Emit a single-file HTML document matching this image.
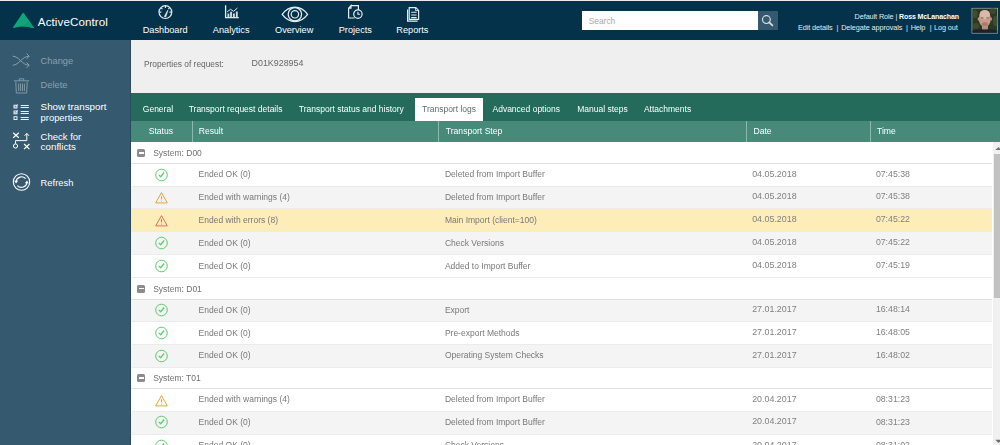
<!DOCTYPE html>
<html><head><meta charset="utf-8">
<style>
*{box-sizing:border-box;margin:0;padding:0}
html,body{width:1000px;height:445px;overflow:hidden;background:#fff;font-family:"Liberation Sans",sans-serif;position:relative}
.abs{position:absolute}
.t{position:absolute;white-space:nowrap;line-height:1;font-family:"Liberation Sans",sans-serif}
b{font-weight:700}
</style></head><body><div id="wrap" style="position:absolute;left:0;top:0;width:1000px;height:445px;filter:blur(0.5px)">
<div class="abs" style="left:0;top:0;width:1000px;height:1px;background:#eeebec"></div><div class="abs" style="left:0;top:1px;width:1000px;height:39px;background:#03324a"></div><svg class="abs" style="left:0;top:0" width="120" height="40" viewBox="0 0 120 40">
<path d="M22.7,12.9 Q23.3,12.4 23.9,13.2 L33.7,27.3 Q34.2,28.3 33.1,28.1 Q27.8,26.4 22.6,26.6 Q17.6,26.8 13.8,27.9 Q12.6,28.1 13.2,27.1 Z" fill="#10a47b"/>
<path d="M27.5,21.5 L33.7,27.3 Q34.2,28.3 33.1,28.1 Q27.8,26.4 22.6,26.6 Z" fill="#0d9a72" opacity="0.8"/>
</svg><div class="t" style="left:37.80px;top:15.98px;font-size:11.6px;color:#ffffff;font-weight:400;letter-spacing:0.1px;">ActiveControl</div>
<div class="t" style="left:142.70px;top:25.61px;font-size:9.2px;color:#ffffff;font-weight:400;letter-spacing:0px;">Dashboard</div>
<div class="t" style="left:212.80px;top:25.61px;font-size:9.2px;color:#ffffff;font-weight:400;letter-spacing:0px;">Analytics</div>
<div class="t" style="left:275.00px;top:25.61px;font-size:9.2px;color:#ffffff;font-weight:400;letter-spacing:0px;">Overview</div>
<div class="t" style="left:338.70px;top:25.61px;font-size:9.2px;color:#ffffff;font-weight:400;letter-spacing:0px;">Projects</div>
<div class="t" style="left:396.30px;top:25.61px;font-size:9.2px;color:#ffffff;font-weight:400;letter-spacing:0px;">Reports</div>
<svg class="abs" style="left:0;top:0" width="440" height="40" viewBox="0 0 440 40" fill="none" stroke="#e6ecef" stroke-width="1.2">
<circle cx="165.4" cy="12.1" r="6.4"/>
<path d="M165.4,6.1V8 M161.2,7.9L162.5,9.2 M169.6,7.9L168.3,9.2 M159.4,12.1H161.3 M171.4,12.1H169.5" stroke-width="1.1"/>
<path d="M164.2,16.4 L167.5,10.3 Q168,10 168.1,10.6 L165.9,17 Q165,17.4 164.2,16.4 Z" fill="#e6ecef" stroke-width="0.3"/>
<path d="M225.6,5.2 V17.7 H238.8" stroke-width="1.3"/>
<path d="M228.4,17.4V13.6 M231.1,17.4V11.8 M233.9,17.4V13.4 M236.8,17.4V11.4" stroke-width="1.9" stroke="#cfd9dd"/>
<path d="M227.2,11.8 L230.6,9.3 L233.6,11.4 L237.4,8" stroke-width="1"/>
<path d="M282.2,14.3 C286.5,8.6 291,7.1 294.9,7.1 C298.8,7.1 303.3,8.6 307.6,14.3 C303.3,20 298.8,21.5 294.9,21.5 C291,21.5 286.5,20 282.2,14.3 Z" stroke-width="1.3"/>
<circle cx="294.9" cy="14.3" r="6.7" stroke-width="1.3"/>
<circle cx="294.9" cy="14.3" r="3.7" stroke-width="1.2"/>
<path d="M351,5.6 H358.4 V10 M354.5,18 H348.6 V8.2 L351,5.6 V8.2 H348.6" />
<circle cx="357.9" cy="14.1" r="4.2"/>
<path d="M357.9,11.7 V14.3 H360.1" stroke-width="1.1"/>
<path d="M407.6,9.4 V21.2 H417.6" />
<path d="M409.2,7.6 H415.8 L418.6,10.4 V19.4 H409.2 Z" />
<path d="M415.6,7.8 V10.6 H418.4" stroke-width="0.9"/>
<path d="M411.2,12.3 H416.6 M411.2,15 H416.6 M411.2,17.6 H416.6" stroke-width="1.1"/>
</svg><div class="abs" style="left:582px;top:11px;width:175.5px;height:19.1px;background:#fff"></div><div class="t" style="left:588.70px;top:16.59px;font-size:8.4px;color:#a9a9a9;font-weight:400;letter-spacing:0px;">Search</div>
<div class="abs" style="left:757.5px;top:11px;width:20.5px;height:19.1px;background:#35596f"></div><svg class="abs" style="left:750px;top:8px" width="30" height="26" viewBox="750 8 30 26" fill="none" stroke="#d8e0e4" stroke-width="1.2">
<circle cx="766.4" cy="19.6" r="3.9"/><path d="M769.2,22.4 L772.4,25.4" stroke-width="1.7" stroke-linecap="round"/></svg><div class="t" style="left:854.60px;top:13.22px;font-size:7.3px;color:#e4ebee;font-weight:400;letter-spacing:-0.1px;">Default Role</div>
<div class="t" style="left:895.40px;top:13.47px;font-size:7.0px;color:#e4ebee;font-weight:400;letter-spacing:0px;">|</div>
<div class="t" style="left:899.00px;top:13.47px;font-size:7.0px;color:#ffffff;font-weight:700;letter-spacing:-0.1px;">Ross McLanachan</div>
<div class="t" style="left:798.00px;top:24.42px;font-size:7.3px;color:#e4ebee;font-weight:400;letter-spacing:-0.1px;">Edit details</div>
<div class="t" style="left:836.40px;top:24.42px;font-size:7.3px;color:#e4ebee;font-weight:400;letter-spacing:-0.1px;">|</div>
<div class="t" style="left:841.20px;top:24.42px;font-size:7.3px;color:#e4ebee;font-weight:400;letter-spacing:-0.1px;">Delegate approvals</div>
<div class="t" style="left:906.00px;top:24.42px;font-size:7.3px;color:#e4ebee;font-weight:400;letter-spacing:-0.1px;">|</div>
<div class="t" style="left:910.70px;top:24.42px;font-size:7.3px;color:#e4ebee;font-weight:400;letter-spacing:-0.1px;">Help</div>
<div class="t" style="left:929.80px;top:24.42px;font-size:7.3px;color:#e4ebee;font-weight:400;letter-spacing:-0.1px;">|</div>
<div class="t" style="left:934.00px;top:24.42px;font-size:7.3px;color:#e4ebee;font-weight:400;letter-spacing:-0.1px;">Log out</div>
<svg class="abs" style="left:970px;top:6px" width="30" height="30" viewBox="970 6 30 30">
<defs><filter id="bl" x="-20%" y="-20%" width="140%" height="140%"><feGaussianBlur stdDeviation="0.55"/></filter>
<clipPath id="cp"><rect x="972.3" y="8.6" width="25" height="24.2"/></clipPath></defs>
<rect x="971.6" y="7.9" width="26.4" height="25.6" fill="#a9b8bd"/>
<g clip-path="url(#cp)">
<rect x="972" y="8" width="26" height="26" fill="#2b3824"/>
<g filter="url(#bl)">
<ellipse cx="975" cy="14" rx="2.5" ry="4" fill="#3f4e32"/>
<ellipse cx="995.5" cy="21" rx="2.5" ry="5" fill="#3f4e33"/>
<ellipse cx="993" cy="11" rx="3" ry="3" fill="#3b4a30"/>
<ellipse cx="976" cy="26" rx="3" ry="3" fill="#3e4c32"/>
<rect x="982" y="23" width="6" height="7" fill="#b88a7a"/>
<ellipse cx="984.8" cy="18.8" rx="6" ry="8.4" fill="#c99b8b"/>
<ellipse cx="984.8" cy="14.6" rx="5.2" ry="4.6" fill="#dcb8a9"/>
<ellipse cx="978.6" cy="19" rx="1" ry="1.8" fill="#c0907f"/>
<ellipse cx="991" cy="19" rx="1" ry="1.8" fill="#c0907f"/>
<rect x="981" y="17.4" width="2.4" height="1" fill="#7a5a50"/>
<rect x="986.4" y="17.4" width="2.4" height="1" fill="#7a5a50"/>
<ellipse cx="984.8" cy="24.3" rx="3.2" ry="2" fill="#a87d70"/>
<path d="M970,36 L971,31 Q978,28.6 984.8,29.6 Q992,28.6 999,31 L1000,36 Z" fill="#1e2229"/>
</g></g>
</svg><div class="abs" style="left:0;top:40px;width:131px;height:405px;background:#35596f"></div><div class="t" style="left:40.60px;top:56.53px;font-size:9.3px;color:#8aa0ad;font-weight:400;letter-spacing:0px;">Change</div>
<div class="t" style="left:40.60px;top:80.63px;font-size:9.3px;color:#8aa0ad;font-weight:400;letter-spacing:0px;">Delete</div>
<div class="t" style="left:40.60px;top:102.40px;font-size:9.8px;color:#ffffff;font-weight:400;letter-spacing:0px;">Show transport</div>
<div class="t" style="left:40.60px;top:112.64px;font-size:9.4px;color:#ffffff;font-weight:400;letter-spacing:0px;">properties</div>
<div class="t" style="left:40.60px;top:131.86px;font-size:9.5px;color:#ffffff;font-weight:400;letter-spacing:0px;">Check for</div>
<div class="t" style="left:40.60px;top:141.50px;font-size:9.8px;color:#ffffff;font-weight:400;letter-spacing:0px;">conflicts</div>
<div class="t" style="left:40.60px;top:177.64px;font-size:9.4px;color:#ffffff;font-weight:400;letter-spacing:0px;">Refresh</div>
<svg class="abs" style="left:0;top:40px" width="40" height="160" viewBox="0 40 40 160" fill="none" stroke="#8aa0ad" stroke-width="1">
<path d="M12.8,56.2 C19,56.2 22,65.2 29,65.2 M12.8,65.2 C19,65.2 22,56.2 29,56.2 M26.6,53.6 L29.2,56.2 L26.6,58.8 M26.6,62.6 L29.2,65.2 L26.6,67.8"/>
<path d="M13.9,80.8 H29.1 M19.3,80.6 V78.8 H23.7 V80.6 M15.8,81.6 L16.3,93 H26.7 L27.2,81.6 M18.7,83.5 V91 M20.6,83.5V91 M22.5,83.5V91 M24.4,83.5V91" stroke-width="0.9"/>
</svg><svg class="abs" style="left:0;top:95px" width="40" height="110" viewBox="0 95 40 110" fill="none" stroke="#ffffff" stroke-width="1">
<rect x="14" y="105.2" width="3" height="2.8" stroke-width="0.9"/><rect x="14" y="111" width="3" height="2.8" stroke-width="0.9"/>
<rect x="14" y="116.7" width="3" height="2.8" stroke-width="0.9"/>
<path d="M14.6,106.4 L15.5,107.3 L17.6,104.4 M14.6,112.2 L15.5,113.1 L17.6,110.2" stroke-width="0.8"/>
<path d="M20.7,105.5 H28.8 M20.7,107.5 H28.8 M20.7,111.5 H28.8 M20.7,113.5 H28.8 M20.7,117.5 H28.8 M20.7,119.5 H28.8" stroke-width="0.9"/>
<path d="M13.2,132.8 L18.8,137.8 M18.8,132.8 L13.2,137.8" stroke-width="1.15"/>
<path d="M15.5,143.8 V140.6 H26.8 V133.6 M24.6,135.8 L26.8,133.4 L29,135.8"/>
<circle cx="15.5" cy="146" r="2.1"/>
<path d="M24.1,144 L29.4,149.2 M29.4,144 L24.1,149.2" stroke-width="1.15"/>
<circle cx="21.5" cy="182" r="8.2" stroke-width="1.1"/>
<path d="M16,181.6 A5.6,5.6 0 0 1 25.6,178.6 M27,182.6 A5.6,5.6 0 0 1 17.4,185.6" stroke-width="1.1"/>
<path d="M14.2,180.8 L18.2,180.8 L16,183.6 Z M28.8,183.2 L24.8,183.2 L27,180.4 Z" fill="#fff" stroke="none"/>
</svg><div class="abs" style="left:131px;top:40px;width:869px;height:52.6px;background:#efefef"></div><div class="t" style="left:144.00px;top:59.93px;font-size:8.35px;color:#666666;font-weight:400;letter-spacing:0px;">Properties of request:</div>
<div class="t" style="left:251.60px;top:59.47px;font-size:8.9px;color:#666666;font-weight:400;letter-spacing:0px;">D01K928954</div>
<div class="abs" style="left:131px;top:92.6px;width:869px;height:28.4px;background:#246b5c"></div><div class="abs" style="left:415px;top:98px;width:68.2px;height:23px;background:#ffffff"></div><div class="t" style="left:142.80px;top:104.80px;font-size:8.5px;color:#ffffff;font-weight:400;letter-spacing:0px;">General</div>
<div class="t" style="left:188.70px;top:104.80px;font-size:8.5px;color:#ffffff;font-weight:400;letter-spacing:0px;">Transport request details</div>
<div class="t" style="left:298.80px;top:104.80px;font-size:8.5px;color:#ffffff;font-weight:400;letter-spacing:0px;">Transport status and history</div>
<div class="t" style="left:422.00px;top:104.80px;font-size:8.5px;color:#5b706b;font-weight:400;letter-spacing:0px;">Transport logs</div>
<div class="t" style="left:492.50px;top:104.80px;font-size:8.5px;color:#ffffff;font-weight:400;letter-spacing:0px;">Advanced options</div>
<div class="t" style="left:577.20px;top:104.80px;font-size:8.5px;color:#ffffff;font-weight:400;letter-spacing:0px;">Manual steps</div>
<div class="t" style="left:643.90px;top:104.80px;font-size:8.5px;color:#ffffff;font-weight:400;letter-spacing:0px;">Attachments</div>
<div class="abs" style="left:131px;top:121px;width:869px;height:20.8px;background:#488a7a"></div><div class="abs" style="left:191.9px;top:121px;width:1px;height:20.8px;background:#8cb8ad"></div><div class="abs" style="left:438.0px;top:121px;width:1px;height:20.8px;background:#8cb8ad"></div><div class="abs" style="left:746.0px;top:121px;width:1px;height:20.8px;background:#8cb8ad"></div><div class="abs" style="left:869.8px;top:121px;width:1px;height:20.8px;background:#8cb8ad"></div><div class="t" style="left:148.70px;top:127.12px;font-size:8.6px;color:#ffffff;font-weight:400;letter-spacing:0px;">Status</div>
<div class="t" style="left:198.70px;top:127.12px;font-size:8.6px;color:#ffffff;font-weight:400;letter-spacing:0px;">Result</div>
<div class="t" style="left:445.80px;top:127.12px;font-size:8.6px;color:#ffffff;font-weight:400;letter-spacing:0px;">Transport Step</div>
<div class="t" style="left:753.50px;top:127.12px;font-size:8.6px;color:#ffffff;font-weight:400;letter-spacing:0px;">Date</div>
<div class="t" style="left:877.00px;top:127.12px;font-size:8.6px;color:#ffffff;font-weight:400;letter-spacing:0px;">Time</div>
<div class="abs" style="left:131px;top:141.80px;width:860.6px;height:21.90px;background:#fff"></div><div class="abs" style="left:131px;top:162.70px;width:860.6px;height:1px;background:#e0e0e0"></div><div class="abs" style="left:137.2px;top:148.90px;width:8.2px;height:8px;border-radius:1.6px;background:#8c8c8c"></div><div class="abs" style="left:139px;top:152.20px;width:4.6px;height:1.4px;background:#fff"></div><div class="t" style="left:153.20px;top:149.00px;font-size:8.5px;color:#707070;font-weight:400;letter-spacing:0px;">System: D00</div>
<div class="abs" style="left:131px;top:163.70px;width:860.6px;height:22.80px;background:#ffffff"></div><div class="abs" style="left:132px;top:185.50px;width:859.6px;height:1px;background:#ebebeb"></div><svg class="abs" style="left:150px;top:164.50px" width="24" height="20" viewBox="0 0 24 20" fill="none" stroke="#5ccc6c" stroke-width="1"><circle cx="11.5" cy="10" r="5.8"/><path d="M8.8,9.9 L10.7,11.7 L14.1,7.5" stroke-width="1.3"/></svg><div class="t" style="left:198.60px;top:169.90px;font-size:8.5px;color:#787878;font-weight:400;letter-spacing:0px;">Ended OK (0)</div>
<div class="t" style="left:444.90px;top:169.90px;font-size:8.5px;color:#787878;font-weight:400;letter-spacing:0px;">Deleted from Import Buffer</div>
<div class="t" style="left:752.20px;top:169.57px;font-size:8.9px;color:#808080;font-weight:400;letter-spacing:0px;">04.05.2018</div>
<div class="t" style="left:875.90px;top:169.69px;font-size:8.75px;color:#808080;font-weight:400;letter-spacing:0px;">07:45:38</div>
<div class="abs" style="left:131px;top:186.50px;width:860.6px;height:22.90px;background:#f4f4f4"></div><div class="abs" style="left:132px;top:208.40px;width:859.6px;height:1px;background:#ebebeb"></div><svg class="abs" style="left:150px;top:187.30px" width="24" height="20" viewBox="0 0 24 20" fill="none" stroke="#e2a539" stroke-width="1"><path d="M11.5,5.6 L17.3,15.9 H5.7 Z" stroke-linejoin="round"/><path d="M11.5,9.1 V12.5" stroke-width="1.1"/><circle cx="11.5" cy="14" r="0.6" fill="#e2a539" stroke="none"/></svg><div class="t" style="left:198.60px;top:192.70px;font-size:8.5px;color:#787878;font-weight:400;letter-spacing:0px;">Ended with warnings (4)</div>
<div class="t" style="left:444.90px;top:192.70px;font-size:8.5px;color:#787878;font-weight:400;letter-spacing:0px;">Deleted from Import Buffer</div>
<div class="t" style="left:752.20px;top:192.37px;font-size:8.9px;color:#808080;font-weight:400;letter-spacing:0px;">04.05.2018</div>
<div class="t" style="left:875.90px;top:192.49px;font-size:8.75px;color:#808080;font-weight:400;letter-spacing:0px;">07:45:38</div>
<div class="abs" style="left:131px;top:209.40px;width:860.6px;height:22.90px;background:#fdedb9"></div><div class="abs" style="left:132px;top:231.30px;width:859.6px;height:1px;background:#ebebeb"></div><svg class="abs" style="left:150px;top:210.20px" width="24" height="20" viewBox="0 0 24 20" fill="none" stroke="#d8735a" stroke-width="1"><path d="M11.5,5.6 L17.3,15.9 H5.7 Z" stroke-linejoin="round"/><path d="M11.5,9.1 V12.5" stroke-width="1.1"/><circle cx="11.5" cy="14" r="0.6" fill="#d8735a" stroke="none"/></svg><div class="t" style="left:198.60px;top:215.60px;font-size:8.5px;color:#787878;font-weight:400;letter-spacing:0px;">Ended with errors (8)</div>
<div class="t" style="left:444.90px;top:215.60px;font-size:8.5px;color:#787878;font-weight:400;letter-spacing:0px;">Main Import (client=100)</div>
<div class="t" style="left:752.20px;top:215.27px;font-size:8.9px;color:#808080;font-weight:400;letter-spacing:0px;">04.05.2018</div>
<div class="t" style="left:875.90px;top:215.39px;font-size:8.75px;color:#808080;font-weight:400;letter-spacing:0px;">07:45:22</div>
<div class="abs" style="left:131px;top:232.30px;width:860.6px;height:23.00px;background:#f4f4f4"></div><div class="abs" style="left:132px;top:254.30px;width:859.6px;height:1px;background:#ebebeb"></div><svg class="abs" style="left:150px;top:233.10px" width="24" height="20" viewBox="0 0 24 20" fill="none" stroke="#5ccc6c" stroke-width="1"><circle cx="11.5" cy="10" r="5.8"/><path d="M8.8,9.9 L10.7,11.7 L14.1,7.5" stroke-width="1.3"/></svg><div class="t" style="left:198.60px;top:238.50px;font-size:8.5px;color:#787878;font-weight:400;letter-spacing:0px;">Ended OK (0)</div>
<div class="t" style="left:444.90px;top:238.50px;font-size:8.5px;color:#787878;font-weight:400;letter-spacing:0px;">Check Versions</div>
<div class="t" style="left:752.20px;top:238.17px;font-size:8.9px;color:#808080;font-weight:400;letter-spacing:0px;">04.05.2018</div>
<div class="t" style="left:875.90px;top:238.29px;font-size:8.75px;color:#808080;font-weight:400;letter-spacing:0px;">07:45:22</div>
<div class="abs" style="left:131px;top:255.30px;width:860.6px;height:22.80px;background:#ffffff"></div><div class="abs" style="left:132px;top:277.10px;width:859.6px;height:1px;background:#ebebeb"></div><svg class="abs" style="left:150px;top:256.10px" width="24" height="20" viewBox="0 0 24 20" fill="none" stroke="#5ccc6c" stroke-width="1"><circle cx="11.5" cy="10" r="5.8"/><path d="M8.8,9.9 L10.7,11.7 L14.1,7.5" stroke-width="1.3"/></svg><div class="t" style="left:198.60px;top:261.50px;font-size:8.5px;color:#787878;font-weight:400;letter-spacing:0px;">Ended OK (0)</div>
<div class="t" style="left:444.90px;top:261.50px;font-size:8.5px;color:#787878;font-weight:400;letter-spacing:0px;">Added to Import Buffer</div>
<div class="t" style="left:752.20px;top:261.17px;font-size:8.9px;color:#808080;font-weight:400;letter-spacing:0px;">04.05.2018</div>
<div class="t" style="left:875.90px;top:261.29px;font-size:8.75px;color:#808080;font-weight:400;letter-spacing:0px;">07:45:19</div>
<div class="abs" style="left:131px;top:278.10px;width:860.6px;height:21.40px;background:#fff"></div><div class="abs" style="left:131px;top:298.50px;width:860.6px;height:1px;background:#e0e0e0"></div><div class="abs" style="left:137.2px;top:284.70px;width:8.2px;height:8px;border-radius:1.6px;background:#8c8c8c"></div><div class="abs" style="left:139px;top:288.00px;width:4.6px;height:1.4px;background:#fff"></div><div class="t" style="left:153.20px;top:284.80px;font-size:8.5px;color:#707070;font-weight:400;letter-spacing:0px;">System: D01</div>
<div class="abs" style="left:131px;top:299.50px;width:860.6px;height:22.80px;background:#f4f4f4"></div><div class="abs" style="left:132px;top:321.30px;width:859.6px;height:1px;background:#ebebeb"></div><svg class="abs" style="left:150px;top:300.30px" width="24" height="20" viewBox="0 0 24 20" fill="none" stroke="#5ccc6c" stroke-width="1"><circle cx="11.5" cy="10" r="5.8"/><path d="M8.8,9.9 L10.7,11.7 L14.1,7.5" stroke-width="1.3"/></svg><div class="t" style="left:198.60px;top:305.70px;font-size:8.5px;color:#787878;font-weight:400;letter-spacing:0px;">Ended OK (0)</div>
<div class="t" style="left:444.90px;top:305.70px;font-size:8.5px;color:#787878;font-weight:400;letter-spacing:0px;">Export</div>
<div class="t" style="left:752.20px;top:305.37px;font-size:8.9px;color:#808080;font-weight:400;letter-spacing:0px;">27.01.2017</div>
<div class="t" style="left:875.90px;top:305.49px;font-size:8.75px;color:#808080;font-weight:400;letter-spacing:0px;">16:48:14</div>
<div class="abs" style="left:131px;top:322.30px;width:860.6px;height:22.70px;background:#ffffff"></div><div class="abs" style="left:132px;top:344.00px;width:859.6px;height:1px;background:#ebebeb"></div><svg class="abs" style="left:150px;top:323.10px" width="24" height="20" viewBox="0 0 24 20" fill="none" stroke="#5ccc6c" stroke-width="1"><circle cx="11.5" cy="10" r="5.8"/><path d="M8.8,9.9 L10.7,11.7 L14.1,7.5" stroke-width="1.3"/></svg><div class="t" style="left:198.60px;top:328.50px;font-size:8.5px;color:#787878;font-weight:400;letter-spacing:0px;">Ended OK (0)</div>
<div class="t" style="left:444.90px;top:328.50px;font-size:8.5px;color:#787878;font-weight:400;letter-spacing:0px;">Pre-export Methods</div>
<div class="t" style="left:752.20px;top:328.17px;font-size:8.9px;color:#808080;font-weight:400;letter-spacing:0px;">27.01.2017</div>
<div class="t" style="left:875.90px;top:328.29px;font-size:8.75px;color:#808080;font-weight:400;letter-spacing:0px;">16:48:05</div>
<div class="abs" style="left:131px;top:345.00px;width:860.6px;height:22.50px;background:#f4f4f4"></div><div class="abs" style="left:132px;top:366.50px;width:859.6px;height:1px;background:#ebebeb"></div><svg class="abs" style="left:150px;top:345.80px" width="24" height="20" viewBox="0 0 24 20" fill="none" stroke="#5ccc6c" stroke-width="1"><circle cx="11.5" cy="10" r="5.8"/><path d="M8.8,9.9 L10.7,11.7 L14.1,7.5" stroke-width="1.3"/></svg><div class="t" style="left:198.60px;top:351.20px;font-size:8.5px;color:#787878;font-weight:400;letter-spacing:0px;">Ended OK (0)</div>
<div class="t" style="left:444.90px;top:351.20px;font-size:8.5px;color:#787878;font-weight:400;letter-spacing:0px;">Operating System Checks</div>
<div class="t" style="left:752.20px;top:350.87px;font-size:8.9px;color:#808080;font-weight:400;letter-spacing:0px;">27.01.2017</div>
<div class="t" style="left:875.90px;top:350.99px;font-size:8.75px;color:#808080;font-weight:400;letter-spacing:0px;">16:48:02</div>
<div class="abs" style="left:131px;top:367.50px;width:860.6px;height:21.40px;background:#fff"></div><div class="abs" style="left:131px;top:387.90px;width:860.6px;height:1px;background:#e0e0e0"></div><div class="abs" style="left:137.2px;top:374.10px;width:8.2px;height:8px;border-radius:1.6px;background:#8c8c8c"></div><div class="abs" style="left:139px;top:377.40px;width:4.6px;height:1.4px;background:#fff"></div><div class="t" style="left:153.20px;top:374.20px;font-size:8.5px;color:#707070;font-weight:400;letter-spacing:0px;">System: T01</div>
<div class="abs" style="left:131px;top:388.90px;width:860.6px;height:22.70px;background:#ffffff"></div><div class="abs" style="left:132px;top:410.60px;width:859.6px;height:1px;background:#ebebeb"></div><svg class="abs" style="left:150px;top:389.70px" width="24" height="20" viewBox="0 0 24 20" fill="none" stroke="#e2a539" stroke-width="1"><path d="M11.5,5.6 L17.3,15.9 H5.7 Z" stroke-linejoin="round"/><path d="M11.5,9.1 V12.5" stroke-width="1.1"/><circle cx="11.5" cy="14" r="0.6" fill="#e2a539" stroke="none"/></svg><div class="t" style="left:198.60px;top:395.10px;font-size:8.5px;color:#787878;font-weight:400;letter-spacing:0px;">Ended with warnings (4)</div>
<div class="t" style="left:444.90px;top:395.10px;font-size:8.5px;color:#787878;font-weight:400;letter-spacing:0px;">Deleted from Import Buffer</div>
<div class="t" style="left:752.20px;top:394.77px;font-size:8.9px;color:#808080;font-weight:400;letter-spacing:0px;">20.04.2017</div>
<div class="t" style="left:875.90px;top:394.89px;font-size:8.75px;color:#808080;font-weight:400;letter-spacing:0px;">08:31:23</div>
<div class="abs" style="left:131px;top:411.60px;width:860.6px;height:23.10px;background:#f4f4f4"></div><div class="abs" style="left:132px;top:433.70px;width:859.6px;height:1px;background:#ebebeb"></div><svg class="abs" style="left:150px;top:412.40px" width="24" height="20" viewBox="0 0 24 20" fill="none" stroke="#5ccc6c" stroke-width="1"><circle cx="11.5" cy="10" r="5.8"/><path d="M8.8,9.9 L10.7,11.7 L14.1,7.5" stroke-width="1.3"/></svg><div class="t" style="left:198.60px;top:417.80px;font-size:8.5px;color:#787878;font-weight:400;letter-spacing:0px;">Ended OK (0)</div>
<div class="t" style="left:444.90px;top:417.80px;font-size:8.5px;color:#787878;font-weight:400;letter-spacing:0px;">Deleted from Import Buffer</div>
<div class="t" style="left:752.20px;top:417.47px;font-size:8.9px;color:#808080;font-weight:400;letter-spacing:0px;">20.04.2017</div>
<div class="t" style="left:875.90px;top:417.59px;font-size:8.75px;color:#808080;font-weight:400;letter-spacing:0px;">08:31:23</div>
<div class="abs" style="left:131px;top:434.70px;width:860.6px;height:22.90px;background:#ffffff"></div><div class="abs" style="left:132px;top:456.60px;width:859.6px;height:1px;background:#ebebeb"></div><svg class="abs" style="left:150px;top:435.50px" width="24" height="20" viewBox="0 0 24 20" fill="none" stroke="#5ccc6c" stroke-width="1"><circle cx="11.5" cy="10" r="5.8"/><path d="M8.8,9.9 L10.7,11.7 L14.1,7.5" stroke-width="1.3"/></svg><div class="t" style="left:198.60px;top:440.90px;font-size:8.5px;color:#787878;font-weight:400;letter-spacing:0px;">Ended OK (0)</div>
<div class="t" style="left:444.90px;top:440.90px;font-size:8.5px;color:#787878;font-weight:400;letter-spacing:0px;">Check Versions</div>
<div class="t" style="left:752.20px;top:440.57px;font-size:8.9px;color:#808080;font-weight:400;letter-spacing:0px;">20.04.2017</div>
<div class="t" style="left:875.90px;top:440.69px;font-size:8.75px;color:#808080;font-weight:400;letter-spacing:0px;">08:31:02</div>
<div class="abs" style="left:993px;top:141.8px;width:7px;height:304px;background:#f0f0f0"></div><div class="abs" style="left:994px;top:154px;width:6px;height:144px;background:#c1c1c1"></div><svg class="abs" style="left:993px;top:141.8px" width="7" height="10"><path d="M2.4,8.1 L5.5,5 L8.6,8.1 Z" fill="#707070"/></svg><svg class="abs" style="left:993px;top:435px" width="7" height="10"><path d="M2.4,4.8 L5.5,7.9 L8.6,4.8 Z" fill="#707070"/></svg><div class="abs" style="left:130.4px;top:40px;width:0.8px;height:405px;background:#2a4a5e"></div>
</div></body></html>
